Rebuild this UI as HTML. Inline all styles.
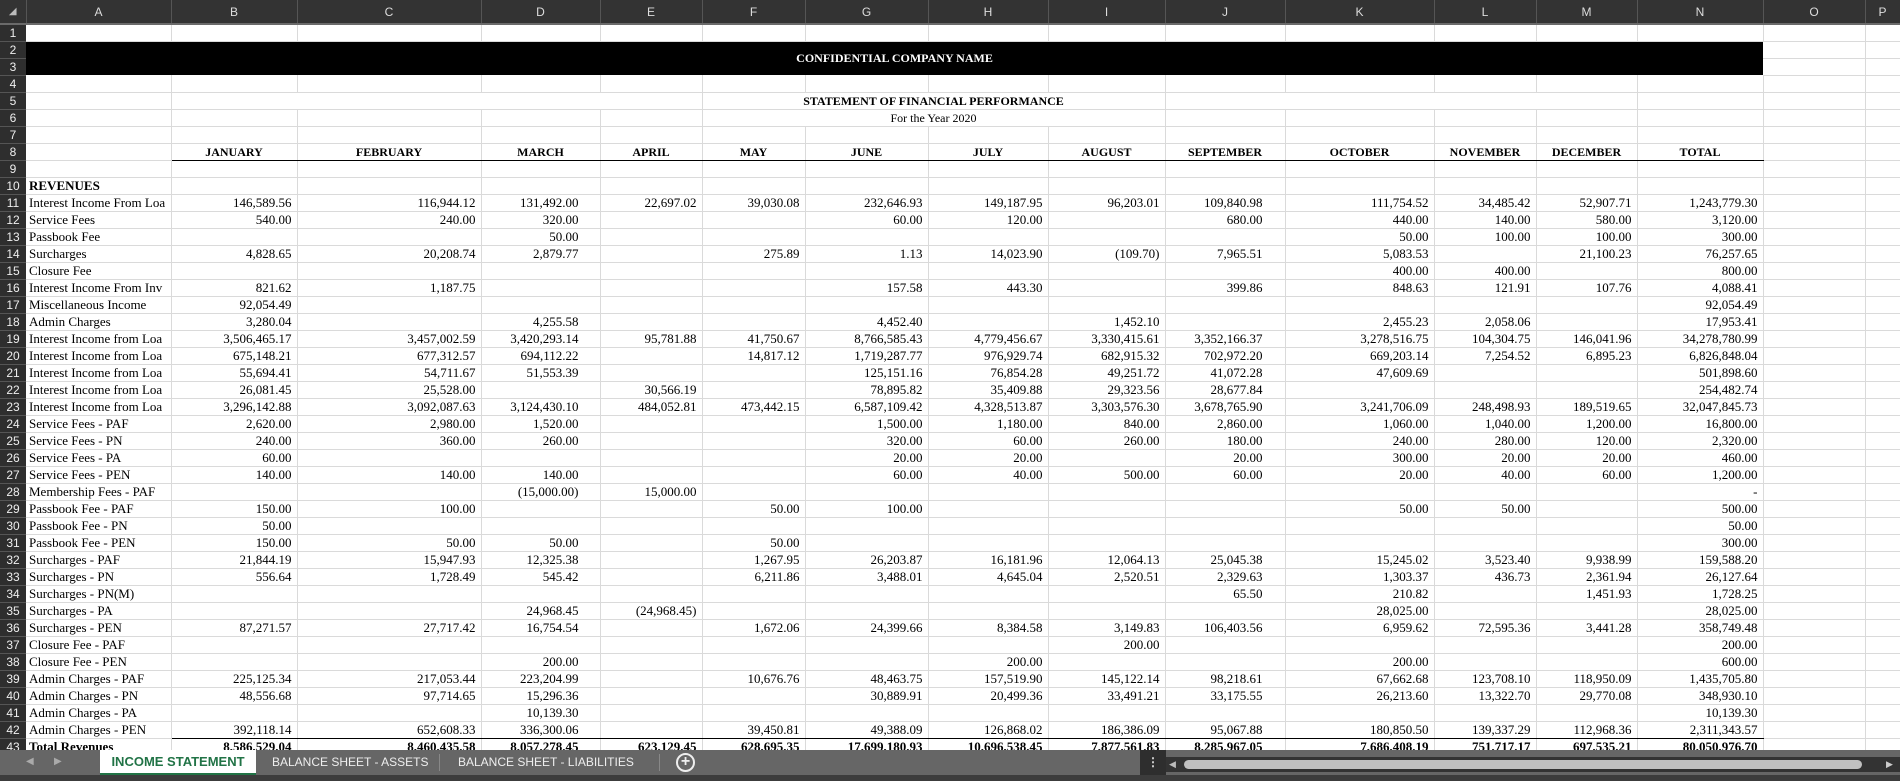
<!DOCTYPE html>
<html><head><meta charset="utf-8"><style>
*{margin:0;padding:0;box-sizing:border-box}
html,body{width:1900px;height:781px;overflow:hidden;background:#fff}
table{position:absolute;left:0;top:0;border-collapse:collapse;table-layout:fixed;width:1900px;font-family:"Liberation Serif",serif;font-size:13px;color:#000}
tr{height:17px}
thead tr{height:24px}
thead th{background:#333;color:#ddd;font:12px "Liberation Sans",sans-serif;font-weight:normal;border-right:1px solid #555;border-bottom:2px solid #6a6a6a;text-align:center}
tbody th{background:#2e2e2e;color:#eee;font:12px "Liberation Sans",sans-serif;font-weight:normal;border-bottom:1px solid #555;text-align:center;padding:0}
td{border-right:1px solid #dadada;border-bottom:1px solid #dadada;text-align:right;padding:0 5px 0 2px;white-space:nowrap;overflow:hidden;line-height:16px;height:17px}
td:nth-child(2){text-align:left;padding-left:3px}
td:nth-child(5){padding-right:21px}
td:nth-child(11){padding-right:22px}
.band{background:#000;color:#fff;font-weight:bold;text-align:center!important;font-size:12px;border:none;padding:0!important}
.ttl{text-align:center!important;font-weight:bold;font-size:12px;padding:0!important;border-right-color:#dadada}
.sub{text-align:center!important;font-size:12px;padding:0!important}
.h{text-align:center!important;font-weight:bold;font-size:12px;border-bottom:1px solid #000;padding:0!important}
.bb{border-bottom:1px solid #000}
.b td{font-weight:bold}
.tabs{position:absolute;left:0;top:750px;width:1900px;height:25px;background:#666;font:12px "Liberation Sans",sans-serif;color:#eee}
.bot{position:absolute;left:0;top:775px;width:1900px;height:6px;background:#3c3c3c}
.tab{position:absolute;top:0;height:25px;line-height:24px}
.act{left:100px;width:156px;background:#fff;color:#217346;font-weight:bold;text-align:center;border-bottom:2px solid #217346;font-size:13px}
.sep{position:absolute;top:4px;width:1px;height:17px;background:#888}
</style></head><body>
<table>
<colgroup><col style="width:26px"><col style="width:145px"><col style="width:126px"><col style="width:184px"><col style="width:119px"><col style="width:102px"><col style="width:103px"><col style="width:123px"><col style="width:120px"><col style="width:117px"><col style="width:120px"><col style="width:149px"><col style="width:102px"><col style="width:101px"><col style="width:126px"><col style="width:102px"><col style="width:35px"></colgroup>
<thead><tr><th style="color:#bbb;font-size:10px">&#9698;</th><th>A</th><th>B</th><th>C</th><th>D</th><th>E</th><th>F</th><th>G</th><th>H</th><th>I</th><th>J</th><th>K</th><th>L</th><th>M</th><th>N</th><th>O</th><th>P</th></tr></thead>
<tbody>
<tr><th>1</th><td></td><td></td><td></td><td></td><td></td><td></td><td></td><td></td><td></td><td></td><td></td><td></td><td></td><td></td><td></td><td></td></tr>
<tr><th>2</th><td colspan="14" rowspan="2" class="band">CONFIDENTIAL COMPANY NAME</td><td></td><td></td></tr>
<tr><th>3</th><td></td><td></td></tr>
<tr><th>4</th><td></td><td></td><td></td><td></td><td></td><td></td><td></td><td></td><td></td><td></td><td></td><td></td><td></td><td></td><td></td><td></td></tr>
<tr><th>5</th><td></td><td colspan="4"></td><td colspan="4" class="ttl">STATEMENT OF FINANCIAL PERFORMANCE</td><td colspan="4"></td><td></td><td></td><td></td></tr>
<tr><th>6</th><td></td><td></td><td></td><td></td><td></td><td colspan="4" class="sub">For the Year 2020</td><td></td><td></td><td></td><td></td><td></td><td></td><td></td></tr>
<tr><th>7</th><td></td><td></td><td></td><td></td><td></td><td></td><td></td><td></td><td></td><td></td><td></td><td></td><td></td><td></td><td></td><td></td></tr>
<tr><th>8</th><td></td><td class="h">JANUARY</td><td class="h">FEBRUARY</td><td class="h">MARCH</td><td class="h">APRIL</td><td class="h">MAY</td><td class="h">JUNE</td><td class="h">JULY</td><td class="h">AUGUST</td><td class="h">SEPTEMBER</td><td class="h">OCTOBER</td><td class="h">NOVEMBER</td><td class="h">DECEMBER</td><td class="h">TOTAL</td><td></td><td></td></tr>
<tr><th>9</th><td></td><td></td><td></td><td></td><td></td><td></td><td></td><td></td><td></td><td></td><td></td><td></td><td></td><td></td><td></td><td></td></tr>
<tr><th>10</th><td style="font-weight:bold">REVENUES</td><td></td><td></td><td></td><td></td><td></td><td></td><td></td><td></td><td></td><td></td><td></td><td></td><td></td><td></td><td></td></tr>
<tr><th>11</th><td>Interest Income From Loa</td><td>146,589.56</td><td>116,944.12</td><td>131,492.00</td><td>22,697.02</td><td>39,030.08</td><td>232,646.93</td><td>149,187.95</td><td>96,203.01</td><td>109,840.98</td><td>111,754.52</td><td>34,485.42</td><td>52,907.71</td><td>1,243,779.30</td><td></td><td></td></tr>
<tr><th>12</th><td>Service Fees</td><td>540.00</td><td>240.00</td><td>320.00</td><td></td><td></td><td>60.00</td><td>120.00</td><td></td><td>680.00</td><td>440.00</td><td>140.00</td><td>580.00</td><td>3,120.00</td><td></td><td></td></tr>
<tr><th>13</th><td>Passbook Fee</td><td></td><td></td><td>50.00</td><td></td><td></td><td></td><td></td><td></td><td></td><td>50.00</td><td>100.00</td><td>100.00</td><td>300.00</td><td></td><td></td></tr>
<tr><th>14</th><td>Surcharges</td><td>4,828.65</td><td>20,208.74</td><td>2,879.77</td><td></td><td>275.89</td><td>1.13</td><td>14,023.90</td><td>(109.70)</td><td>7,965.51</td><td>5,083.53</td><td></td><td>21,100.23</td><td>76,257.65</td><td></td><td></td></tr>
<tr><th>15</th><td>Closure Fee</td><td></td><td></td><td></td><td></td><td></td><td></td><td></td><td></td><td></td><td>400.00</td><td>400.00</td><td></td><td>800.00</td><td></td><td></td></tr>
<tr><th>16</th><td>Interest Income From Inv</td><td>821.62</td><td>1,187.75</td><td></td><td></td><td></td><td>157.58</td><td>443.30</td><td></td><td>399.86</td><td>848.63</td><td>121.91</td><td>107.76</td><td>4,088.41</td><td></td><td></td></tr>
<tr><th>17</th><td>Miscellaneous Income</td><td>92,054.49</td><td></td><td></td><td></td><td></td><td></td><td></td><td></td><td></td><td></td><td></td><td></td><td>92,054.49</td><td></td><td></td></tr>
<tr><th>18</th><td>Admin Charges</td><td>3,280.04</td><td></td><td>4,255.58</td><td></td><td></td><td>4,452.40</td><td></td><td>1,452.10</td><td></td><td>2,455.23</td><td>2,058.06</td><td></td><td>17,953.41</td><td></td><td></td></tr>
<tr><th>19</th><td>Interest Income from Loa</td><td>3,506,465.17</td><td>3,457,002.59</td><td>3,420,293.14</td><td>95,781.88</td><td>41,750.67</td><td>8,766,585.43</td><td>4,779,456.67</td><td>3,330,415.61</td><td>3,352,166.37</td><td>3,278,516.75</td><td>104,304.75</td><td>146,041.96</td><td>34,278,780.99</td><td></td><td></td></tr>
<tr><th>20</th><td>Interest Income from Loa</td><td>675,148.21</td><td>677,312.57</td><td>694,112.22</td><td></td><td>14,817.12</td><td>1,719,287.77</td><td>976,929.74</td><td>682,915.32</td><td>702,972.20</td><td>669,203.14</td><td>7,254.52</td><td>6,895.23</td><td>6,826,848.04</td><td></td><td></td></tr>
<tr><th>21</th><td>Interest Income from Loa</td><td>55,694.41</td><td>54,711.67</td><td>51,553.39</td><td></td><td></td><td>125,151.16</td><td>76,854.28</td><td>49,251.72</td><td>41,072.28</td><td>47,609.69</td><td></td><td></td><td>501,898.60</td><td></td><td></td></tr>
<tr><th>22</th><td>Interest Income from Loa</td><td>26,081.45</td><td>25,528.00</td><td></td><td>30,566.19</td><td></td><td>78,895.82</td><td>35,409.88</td><td>29,323.56</td><td>28,677.84</td><td></td><td></td><td></td><td>254,482.74</td><td></td><td></td></tr>
<tr><th>23</th><td>Interest Income from Loa</td><td>3,296,142.88</td><td>3,092,087.63</td><td>3,124,430.10</td><td>484,052.81</td><td>473,442.15</td><td>6,587,109.42</td><td>4,328,513.87</td><td>3,303,576.30</td><td>3,678,765.90</td><td>3,241,706.09</td><td>248,498.93</td><td>189,519.65</td><td>32,047,845.73</td><td></td><td></td></tr>
<tr><th>24</th><td>Service Fees - PAF</td><td>2,620.00</td><td>2,980.00</td><td>1,520.00</td><td></td><td></td><td>1,500.00</td><td>1,180.00</td><td>840.00</td><td>2,860.00</td><td>1,060.00</td><td>1,040.00</td><td>1,200.00</td><td>16,800.00</td><td></td><td></td></tr>
<tr><th>25</th><td>Service Fees - PN</td><td>240.00</td><td>360.00</td><td>260.00</td><td></td><td></td><td>320.00</td><td>60.00</td><td>260.00</td><td>180.00</td><td>240.00</td><td>280.00</td><td>120.00</td><td>2,320.00</td><td></td><td></td></tr>
<tr><th>26</th><td>Service Fees - PA</td><td>60.00</td><td></td><td></td><td></td><td></td><td>20.00</td><td>20.00</td><td></td><td>20.00</td><td>300.00</td><td>20.00</td><td>20.00</td><td>460.00</td><td></td><td></td></tr>
<tr><th>27</th><td>Service Fees - PEN</td><td>140.00</td><td>140.00</td><td>140.00</td><td></td><td></td><td>60.00</td><td>40.00</td><td>500.00</td><td>60.00</td><td>20.00</td><td>40.00</td><td>60.00</td><td>1,200.00</td><td></td><td></td></tr>
<tr><th>28</th><td>Membership Fees - PAF</td><td></td><td></td><td>(15,000.00)</td><td>15,000.00</td><td></td><td></td><td></td><td></td><td></td><td></td><td></td><td></td><td>-</td><td></td><td></td></tr>
<tr><th>29</th><td>Passbook Fee - PAF</td><td>150.00</td><td>100.00</td><td></td><td></td><td>50.00</td><td>100.00</td><td></td><td></td><td></td><td>50.00</td><td>50.00</td><td></td><td>500.00</td><td></td><td></td></tr>
<tr><th>30</th><td>Passbook Fee - PN</td><td>50.00</td><td></td><td></td><td></td><td></td><td></td><td></td><td></td><td></td><td></td><td></td><td></td><td>50.00</td><td></td><td></td></tr>
<tr><th>31</th><td>Passbook Fee - PEN</td><td>150.00</td><td>50.00</td><td>50.00</td><td></td><td>50.00</td><td></td><td></td><td></td><td></td><td></td><td></td><td></td><td>300.00</td><td></td><td></td></tr>
<tr><th>32</th><td>Surcharges - PAF</td><td>21,844.19</td><td>15,947.93</td><td>12,325.38</td><td></td><td>1,267.95</td><td>26,203.87</td><td>16,181.96</td><td>12,064.13</td><td>25,045.38</td><td>15,245.02</td><td>3,523.40</td><td>9,938.99</td><td>159,588.20</td><td></td><td></td></tr>
<tr><th>33</th><td>Surcharges - PN</td><td>556.64</td><td>1,728.49</td><td>545.42</td><td></td><td>6,211.86</td><td>3,488.01</td><td>4,645.04</td><td>2,520.51</td><td>2,329.63</td><td>1,303.37</td><td>436.73</td><td>2,361.94</td><td>26,127.64</td><td></td><td></td></tr>
<tr><th>34</th><td>Surcharges - PN(M)</td><td></td><td></td><td></td><td></td><td></td><td></td><td></td><td></td><td>65.50</td><td>210.82</td><td></td><td>1,451.93</td><td>1,728.25</td><td></td><td></td></tr>
<tr><th>35</th><td>Surcharges - PA</td><td></td><td></td><td>24,968.45</td><td>(24,968.45)</td><td></td><td></td><td></td><td></td><td></td><td>28,025.00</td><td></td><td></td><td>28,025.00</td><td></td><td></td></tr>
<tr><th>36</th><td>Surcharges - PEN</td><td>87,271.57</td><td>27,717.42</td><td>16,754.54</td><td></td><td>1,672.06</td><td>24,399.66</td><td>8,384.58</td><td>3,149.83</td><td>106,403.56</td><td>6,959.62</td><td>72,595.36</td><td>3,441.28</td><td>358,749.48</td><td></td><td></td></tr>
<tr><th>37</th><td>Closure Fee - PAF</td><td></td><td></td><td></td><td></td><td></td><td></td><td></td><td>200.00</td><td></td><td></td><td></td><td></td><td>200.00</td><td></td><td></td></tr>
<tr><th>38</th><td>Closure Fee - PEN</td><td></td><td></td><td>200.00</td><td></td><td></td><td></td><td>200.00</td><td></td><td></td><td>200.00</td><td></td><td></td><td>600.00</td><td></td><td></td></tr>
<tr><th>39</th><td>Admin Charges - PAF</td><td>225,125.34</td><td>217,053.44</td><td>223,204.99</td><td></td><td>10,676.76</td><td>48,463.75</td><td>157,519.90</td><td>145,122.14</td><td>98,218.61</td><td>67,662.68</td><td>123,708.10</td><td>118,950.09</td><td>1,435,705.80</td><td></td><td></td></tr>
<tr><th>40</th><td>Admin Charges - PN</td><td>48,556.68</td><td>97,714.65</td><td>15,296.36</td><td></td><td></td><td>30,889.91</td><td>20,499.36</td><td>33,491.21</td><td>33,175.55</td><td>26,213.60</td><td>13,322.70</td><td>29,770.08</td><td>348,930.10</td><td></td><td></td></tr>
<tr><th>41</th><td>Admin Charges - PA</td><td></td><td></td><td>10,139.30</td><td></td><td></td><td></td><td></td><td></td><td></td><td></td><td></td><td></td><td>10,139.30</td><td></td><td></td></tr>
<tr><th>42</th><td>Admin Charges - PEN</td><td class="bb">392,118.14</td><td class="bb">652,608.33</td><td class="bb">336,300.06</td><td class="bb"></td><td class="bb">39,450.81</td><td class="bb">49,388.09</td><td class="bb">126,868.02</td><td class="bb">186,386.09</td><td class="bb">95,067.88</td><td class="bb">180,850.50</td><td class="bb">139,337.29</td><td class="bb">112,968.36</td><td class="bb">2,311,343.57</td><td></td><td></td></tr>
<tr class="b"><th>43</th><td>Total Revenues</td><td>8,586,529.04</td><td>8,460,435.58</td><td>8,057,278.45</td><td>623,129.45</td><td>628,695.35</td><td>17,699,180.93</td><td>10,696,538.45</td><td>7,877,561.83</td><td>8,285,967.05</td><td>7,686,408.19</td><td>751,717.17</td><td>697,535.21</td><td>80,050,976.70</td><td></td><td></td></tr>
</tbody></table>
<div class="tabs">
<div class="tab" style="left:26px;color:#aaa;font-size:10px">&#9664;</div>
<div class="tab" style="left:54px;color:#aaa;font-size:10px">&#9654;</div>
<div class="tab act">INCOME STATEMENT</div>
<div class="tab" style="left:272px">BALANCE SHEET - ASSETS</div>
<div class="sep" style="left:439px"></div>
<div class="tab" style="left:458px">BALANCE SHEET - LIABILITIES</div>
<div class="sep" style="left:659px"></div>
<div class="tab" style="left:676px;top:3px;width:19px;height:19px;border:2px solid #eee;border-radius:50%;line-height:14px;text-align:center;font-weight:bold;font-size:16px">+</div>
<div style="position:absolute;left:1140px;top:0;width:26px;height:25px;background:#2e2e2e;color:#ddd;text-align:center;line-height:24px;font-weight:bold">&#8942;</div>
<div style="position:absolute;left:1166px;top:7px;width:734px;height:15px;background:#333"></div>
<div style="position:absolute;left:1169px;top:9px;color:#bbb;font-size:9px;line-height:11px">&#9664;</div>
<div style="position:absolute;left:1184px;top:10px;width:678px;height:9px;background:#c0c0c0;border-radius:5px"></div>
<div style="position:absolute;left:1886px;top:9px;color:#ccc;font-size:9px;line-height:11px">&#9654;</div>
</div>
<div class="bot"></div>
</body></html>
